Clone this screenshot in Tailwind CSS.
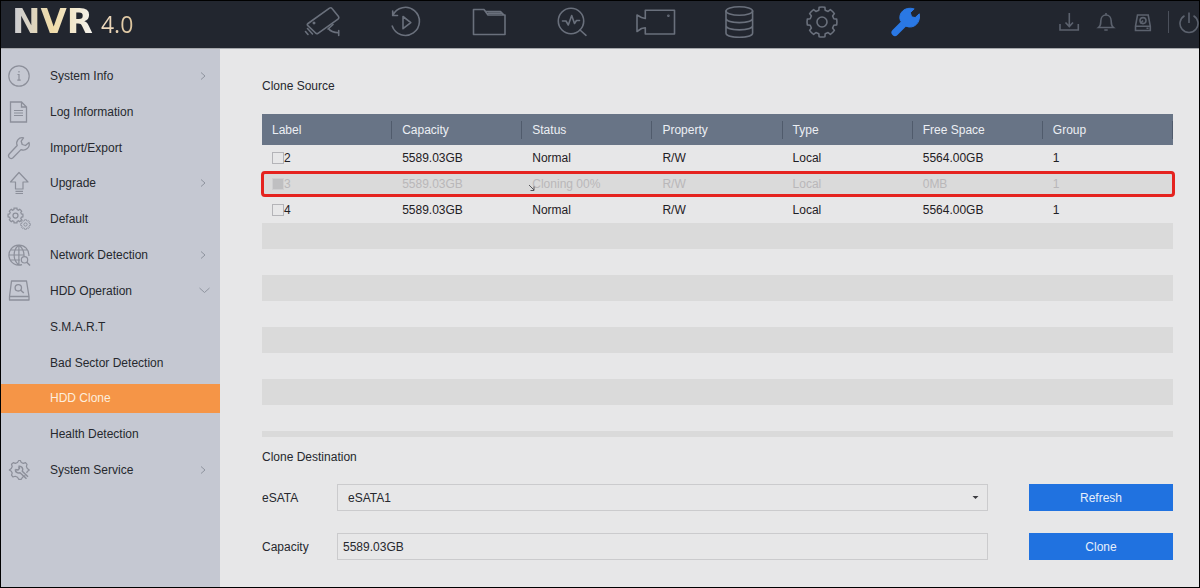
<!DOCTYPE html>
<html lang="en">
<head>
<meta charset="utf-8">
<title>NVR 4.0 - HDD Clone</title>
<script src="https://cdn.jsdelivr.net/npm/@tailwindcss/browser@4"></script>
</head>
<body class="flex min-h-screen flex-col border border-black bg-[#e7e7e8] font-['Liberation_Sans',Arial,sans-serif] text-xs text-[#26282e]">

<svg class="hidden">
  <symbol id="gear" viewBox="-17 -17 34 34">
    <path d="M14.7-2.9 Q15.2 0 14.7 2.9 L11.8 3.2 L10.6 6.1 L12.4 8.4 Q10.8 10.8 8.4 12.4 L6.1 10.6 L3.2 11.8 L2.9 14.7 Q0 15.2 -2.9 14.7 L-3.2 11.8 L-6.1 10.6 L-8.4 12.4 Q-10.8 10.8 -12.4 8.4 L-10.6 6.1 L-11.8 3.2 L-14.7 2.9 Q-15.2 0 -14.7-2.9 L-11.8-3.2 L-10.6-6.1 L-12.4-8.4 Q-10.8-10.8 -8.4-12.4 L-6.1-10.6 L-3.2-11.8 L-2.9-14.7 Q0-15.2 2.9-14.7 L3.2-11.8 L6.1-10.6 L8.4-12.4 Q10.8-10.8 12.4-8.4 L10.6-6.1 L11.8-3.2Z"/>
    <circle r="5"/>
  </symbol>
  <symbol id="chev" viewBox="0 0 12 12"><path d="M3 2.5 7 6 3 9.5"/></symbol>
</svg>

<header class="flex h-12 items-center overflow-hidden border-b border-[#a5a7ab] bg-[#22262f] pb-[5px]">
  <h1 class="flex w-[280px] shrink-0 items-baseline gap-2 pl-[11px] font-['DejaVu_Sans',sans-serif] leading-8">
    <span class="bg-linear-to-r from-[#c9cbd3] via-[#f0dca8] to-[#f4f2ee] bg-clip-text text-[34px] font-bold text-transparent">NVR</span>
    <span class="bg-linear-to-r from-[#f0dcc4] to-[#dcc49c] bg-clip-text font-['Open_Sans',sans-serif] text-[23px] text-transparent">4.0</span>
  </h1>
  <nav aria-label="Main" class="grid w-[666px] grid-cols-8 items-center justify-items-center text-[#6a707c]">
    <button aria-label="Live view"><svg class="size-[48px] fill-none stroke-current [stroke-width:1.6]" viewBox="0 0 48 48" stroke-linejoin="round" stroke-linecap="round">
      <path d="M9 25.5 30.5 10.2Q32 9.2 33 10.5L39.5 18.5Q40.5 20 39 21.2L19 35.3Q17.6 36.2 16.6 35L8.6 27.4Q7.8 26.4 9 25.5Z"/><circle cx="15" cy="25" r=".7"/>
      <path d="M29.5 30.5Q32 34.5 39.5 34.8M39.7 32.5V37.5M34 26.5 29 31"/><path d="M8.5 30.5 13.5 36M6.5 33.5 9 36.5"/></svg></button>
    <button aria-label="Playback"><svg class="size-[48px] fill-none stroke-current [stroke-width:1.6]" viewBox="0 0 48 48" stroke-linejoin="round" stroke-linecap="round">
      <path d="M10.7 17.5A14 14 0 1 1 10.2 28M10.7 13V17.5H15.5M21 18.5 28.8 24.6 21 30.7Z"/></svg></button>
    <button aria-label="File management"><svg class="size-[48px] fill-none stroke-current [stroke-width:1.6]" viewBox="0 0 48 48" stroke-linejoin="round" stroke-linecap="round">
      <path d="M8.5 11.5H19L23 17H40V36.5H8.5ZM21 13.5H35.5L39 17M23.5 15.2H36.5"/></svg></button>
    <button aria-label="Smart analysis"><svg class="size-[48px] fill-none stroke-current [stroke-width:1.6]" viewBox="0 0 48 48" stroke-linejoin="round" stroke-linecap="round">
      <circle cx="23" cy="23" r="12.7"/><path d="M32 32 38 37.3M14.5 23H18L20.3 27 23.7 17.5 26.5 25.5 28.5 22.5H31.5"/></svg></button>
    <button aria-label="Camera"><svg class="size-[48px] fill-none stroke-current [stroke-width:1.6]" viewBox="0 0 48 48" stroke-linejoin="round" stroke-linecap="round">
      <path d="M13.3 12.3H42.5V36H13.3V29.7L9.5 30.5 5 33.5V17L9.5 19.5 13.3 20.5Z"/><circle cx="36.4" cy="17.8" r=".5"/></svg></button>
    <button aria-label="Storage"><svg class="size-[48px] fill-none stroke-current [stroke-width:1.6]" viewBox="0 0 48 48" stroke-linejoin="round" stroke-linecap="round">
      <ellipse cx="24.3" cy="13" rx="13.3" ry="4.2"/><path d="M11 13V35C11 40.7 37.6 40.7 37.6 35V13M11 20.3C11 26 37.6 26 37.6 20.3M11 27.6C11 33.3 37.6 33.3 37.6 27.6"/></svg></button>
    <button aria-label="System"><svg class="size-[34px] fill-none stroke-current [stroke-width:1.6]" stroke-linejoin="round"><use href="#gear"/></svg></button>
    <button aria-label="Maintenance" class="text-[#2a78e4]"><svg class="size-[48px] fill-none stroke-current" viewBox="0 0 48 48" stroke-linecap="round" stroke-linejoin="round">
      <path stroke-width="7" d="M14 34.5 26 22.5"/><path class="fill-current" d="M32.8 10.8C24 8 16.5 15 19.5 23L25 28.2C33 31.5 40 24.5 38.3 15.8L34.2 19.6 30.6 18.8 29.4 15Z"/></svg></button>
  </nav>
  <div class="ml-auto flex shrink-0 items-center gap-[13px] text-[#5c626e]">
    <button aria-label="Downloads"><svg class="size-6 fill-none stroke-current [stroke-width:1.6]" viewBox="0 0 24 24"><path d="M12.3 3V16.5M8.5 12.5 12.3 16.5 16 12.5M3 14V20H21.3V14"/></svg></button>
    <button aria-label="Alarms"><svg class="size-6 fill-none stroke-current [stroke-width:1.6]" viewBox="0 0 24 24"><path d="M4.5 17.5H19.5C17 15.5 17.2 13.5 17.2 11 17.2 7.5 15 5 12 5S6.8 7.5 6.8 11C6.8 13.5 7 15.5 4.5 17.5ZM12 3V5M10.3 20H13.7"/></svg></button>
    <button aria-label="Disk"><svg class="size-6 fill-none stroke-current [stroke-width:1.6]" viewBox="0 0 24 24"><path d="M6.5 5H17.2L19.3 16.2V20.5H4.5V16.2ZM4.5 16.2H19.3"/><circle cx="12" cy="10.6" r="3"/><path d="M12 10.6 9.5 13.5M15.5 18.3H17.5"/></svg></button>
    <span class="h-[22px] w-px bg-[#4b505b]"></span>
    <button aria-label="Power" class="-mr-px -ml-[6px]"><svg class="size-6 fill-none stroke-current [stroke-width:1.6]" viewBox="0 0 24 24"><path d="M8.5 5.7A9 9 0 1 0 17.5 5.7M13 2.5V13"/></svg></button>
  </div>
</header>

<div class="flex flex-1">
  <aside class="w-[219px] shrink-0 bg-[#c5c8d2] pt-[9px]">
    <ul class="grid h-[430px] grid-rows-12 items-center [&_a]:flex [&_a]:h-[29px] [&_a]:items-center [&_a]:pr-[10px] [&_a]:pl-[5px] [&_a>span]:ml-[18px] [&_a>span]:flex-1">
      <li><a href="#"><svg class="size-[26px] fill-none stroke-[#8c8f9a] [stroke-width:1.2]" viewBox="0 0 26 26"><circle cx="13" cy="13" r="10.2"/><path d="M13 8V9.6M11.5 11.5H13V17M11.3 17.2H14.7"/></svg><span>System Info</span><svg class="size-3 fill-none stroke-[#8f949f]"><use href="#chev"/></svg></a></li>
      <li><a href="#"><svg class="size-[26px] fill-none stroke-[#8c8f9a] [stroke-width:1.2]" viewBox="0 0 26 26"><path stroke-width="1.3" d="M4.5 3H15.5L20.5 8V23H4.5ZM15.5 3V8H20.5"/><path d="M8 11.5H17M8 14H17M8 16.5H17"/></svg><span>Log Information</span></a></li>
      <li><a href="#"><svg class="size-[26px] fill-none stroke-[#8c8f9a] [stroke-width:1.3]" viewBox="0 0 26 26" stroke-linejoin="round"><path d="M17.5 2.8C12.5 1.8 9.5 6.5 11.2 10.5L3.2 19C1.2 21.5 4.2 25 7 22.8L15 14.6C19.5 16.3 24.5 12.5 23 7.5L19.5 10.5 16.2 9.5 15.2 6.2Z"/></svg><span>Import/Export</span></a></li>
      <li><a href="#"><svg class="size-[26px] fill-none stroke-[#8c8f9a] [stroke-width:1.2]" viewBox="0 0 26 26" stroke-linejoin="round"><path d="M13 2.5 22 12H17V19H9.5V12H4.5ZM9.5 21.3H17M9.5 23.5H17"/></svg><span>Upgrade</span><svg class="size-3 fill-none stroke-[#8f949f]"><use href="#chev"/></svg></a></li>
      <li><a href="#"><svg class="size-[26px] fill-none stroke-[#8c8f9a]" viewBox="0 0 26 26"><use href="#gear" x="1" y="1" width="17" height="17" stroke-width="2.5"/><use href="#gear" x="14" y="13" width="11" height="11" stroke-width="2.8"/></svg><span>Default</span></a></li>
      <li><a href="#"><svg class="size-[26px] fill-none stroke-[#8c8f9a] [stroke-width:1.2]" viewBox="0 0 26 26"><path d="M16 22.6A10 10 0 1 1 22.9 14M12.9 3V23M12.9 3C6.5 8 6.5 18 12.9 23M12.9 3C17 6.5 18.3 10 18 14M3 13H18M4.5 8H21.5M4.5 18H14"/><circle cx="18.5" cy="17.8" r="3.2"/><path stroke-width="1.5" d="M20.8 20.2 24 23.5"/></svg><span>Network Detection</span><svg class="size-3 fill-none stroke-[#8f949f]"><use href="#chev"/></svg></a></li>
      <li><a href="#"><svg class="size-[26px] fill-none stroke-[#8c8f9a] [stroke-width:1.3]" viewBox="0 0 26 26" stroke-linejoin="round"><path d="M5.5 3H20.5L23 18.5V22H3.5V18.5ZM3.5 18.5H23"/><circle cx="12.3" cy="9.8" r="3.2"/><path stroke-width="1.5" d="M14.5 12 17.8 15"/></svg><span>HDD Operation</span><svg class="size-3 fill-none stroke-[#8f949f]" viewBox="0 0 12 12"><path d="M1.5 3 6.5 7.5 11.5 3"/></svg></a></li>
      <li><a href="#"><span class="pl-[26px]">S.M.A.R.T</span></a></li>
      <li><a href="#"><span class="pl-[26px]">Bad Sector Detection</span></a></li>
      <li><a href="#" aria-current="page" class="bg-[#f59547] text-[#fdeedd]"><span class="pl-[26px]">HDD Clone</span></a></li>
      <li><a href="#"><span class="pl-[26px]">Health Detection</span></a></li>
      <li><a href="#"><svg class="size-[26px] fill-none stroke-[#8c8f9a]" viewBox="0 0 26 26" stroke-linejoin="round"><path stroke-width="1.2" d="M19.5 19 18.8 18.8 16.5 20.2 15.3 22.3H12.7L11.5 20.2 9.2 19.3 7 20 5.5 18.2 6.2 16 5.3 14.2 3.3 13 5.3 11.5 6.2 9.5 5.5 7.3 7.3 5.6 9.3 6.4 11.5 5.5 12.7 3.5H14.3L15.3 5.5 17.3 6.4 19.5 5.6 21 7.3 20.4 9.5 21.3 11.5 23.3 13 21.3 14.4 20.6 16"/><path stroke-width="1.5" d="M9.3 12.5C9.3 15 11.5 16.8 14 15.8L20.5 21.8M12.5 9.3C15.5 8.6 17.8 11.5 16.3 14.2L22 19.8M12.5 9.3 13.5 11.3 12 13 9.3 12.5"/></svg><span>System Service</span><svg class="size-3 fill-none stroke-[#8f949f]"><use href="#chev"/></svg></a></li>
    </ul>
  </aside>

  <main class="min-w-0 flex-1 pt-[29px] pr-[26px] pl-[42px]">
    <h2 class="leading-4">Clone Source</h2>
    <div class="relative mt-5">
      <div class="h-[323px] overflow-hidden">
        <table class="w-full table-fixed border-collapse text-left text-[#1f2024] [&_td]:h-[26px] [&_td]:p-0 [&_td]:pl-[10px] [&_th]:p-0 [&_th]:font-normal [&_tbody_tr:nth-child(even)]:bg-[#dadada]">
          <thead class="bg-[#687486] text-[#eceff4]">
            <tr class="h-[31px] [&_span]:block [&_span]:h-[18px] [&_span]:border-r [&_span]:border-[#505b6c] [&_span]:pl-[10px] [&_span]:leading-[18px]">
              <th><span>Label</span></th><th><span>Capacity</span></th><th><span>Status</span></th><th><span>Property</span></th><th><span>Type</span></th><th><span>Free Space</span></th><th><span>Group</span></th>
            </tr>
          </thead>
          <tbody>
            <tr><td><label class="flex items-center"><input type="checkbox" class="size-3 appearance-none border border-[#b4b4b8]">2</label></td><td>5589.03GB</td><td>Normal</td><td>R/W</td><td>Local</td><td>5564.00GB</td><td>1</td></tr>
            <tr class="text-[#b9b7b9]"><td><label class="flex items-center"><input type="checkbox" disabled class="size-3 appearance-none border border-[#cfcfd1] bg-[#bfbfc1]">3</label></td><td>5589.03GB</td><td>Cloning 00%</td><td>R/W</td><td>Local</td><td>0MB</td><td>1</td></tr>
            <tr><td><label class="flex items-center"><input type="checkbox" class="size-3 appearance-none border border-[#b4b4b8]">4</label></td><td>5589.03GB</td><td>Normal</td><td>R/W</td><td>Local</td><td>5564.00GB</td><td>1</td></tr>
            <tr><td colspan="7"></td></tr>
            <tr><td colspan="7"></td></tr>
            <tr><td colspan="7"></td></tr>
            <tr><td colspan="7"></td></tr>
            <tr><td colspan="7"></td></tr>
            <tr><td colspan="7"></td></tr>
            <tr><td colspan="7"></td></tr>
            <tr><td colspan="7"></td></tr>
            <tr><td colspan="7"></td></tr>
          </tbody>
        </table>
      </div>
      <!-- highlight frame around the disk being cloned -->
      <div class="pointer-events-none absolute top-[57px] right-[-2px] left-[-1px] h-[26px] rounded-[4px] border-3 border-[#e5231f]"></div>
      <svg class="absolute top-[70px] left-[266px] h-[8px] w-[8px] fill-none stroke-[#55555a]" viewBox="0 0 8 8"><path d="M1 1 6 6M6 2.5V6.5H2.5"/></svg>
    </div>

    <h2 class="mt-3 leading-4">Clone Destination</h2>
    <form class="mt-[19px] grid grid-cols-[75px_1fr_144px] items-center gap-y-[22px]">
      <label for="esata">eSATA</label>
      <div class="relative mr-[41px]">
        <select id="esata" class="block h-[27px] w-full appearance-none border border-[#cbcbcd] pl-[10px]"><option>eSATA1</option></select>
        <svg class="pointer-events-none absolute top-[12px] right-[9px] h-[4px] w-[7px] fill-[#3c3c40]" viewBox="0 0 7 4"><path d="M0.5 0H6.5L3.5 3Z"/></svg>
      </div>
      <button type="button" class="h-[27px] bg-[#2072e0] text-[#e6effb]">Refresh</button>
      <label for="cap">Capacity</label>
      <div class="mr-[41px]"><input id="cap" readonly value="5589.03GB" class="block h-[27px] w-full border border-[#cbcbcd] pl-[5px]"></div>
      <button type="button" class="h-[27px] bg-[#2072e0] text-[#e6effb]">Clone</button>
    </form>
  </main>
</div>
</body>
</html>
